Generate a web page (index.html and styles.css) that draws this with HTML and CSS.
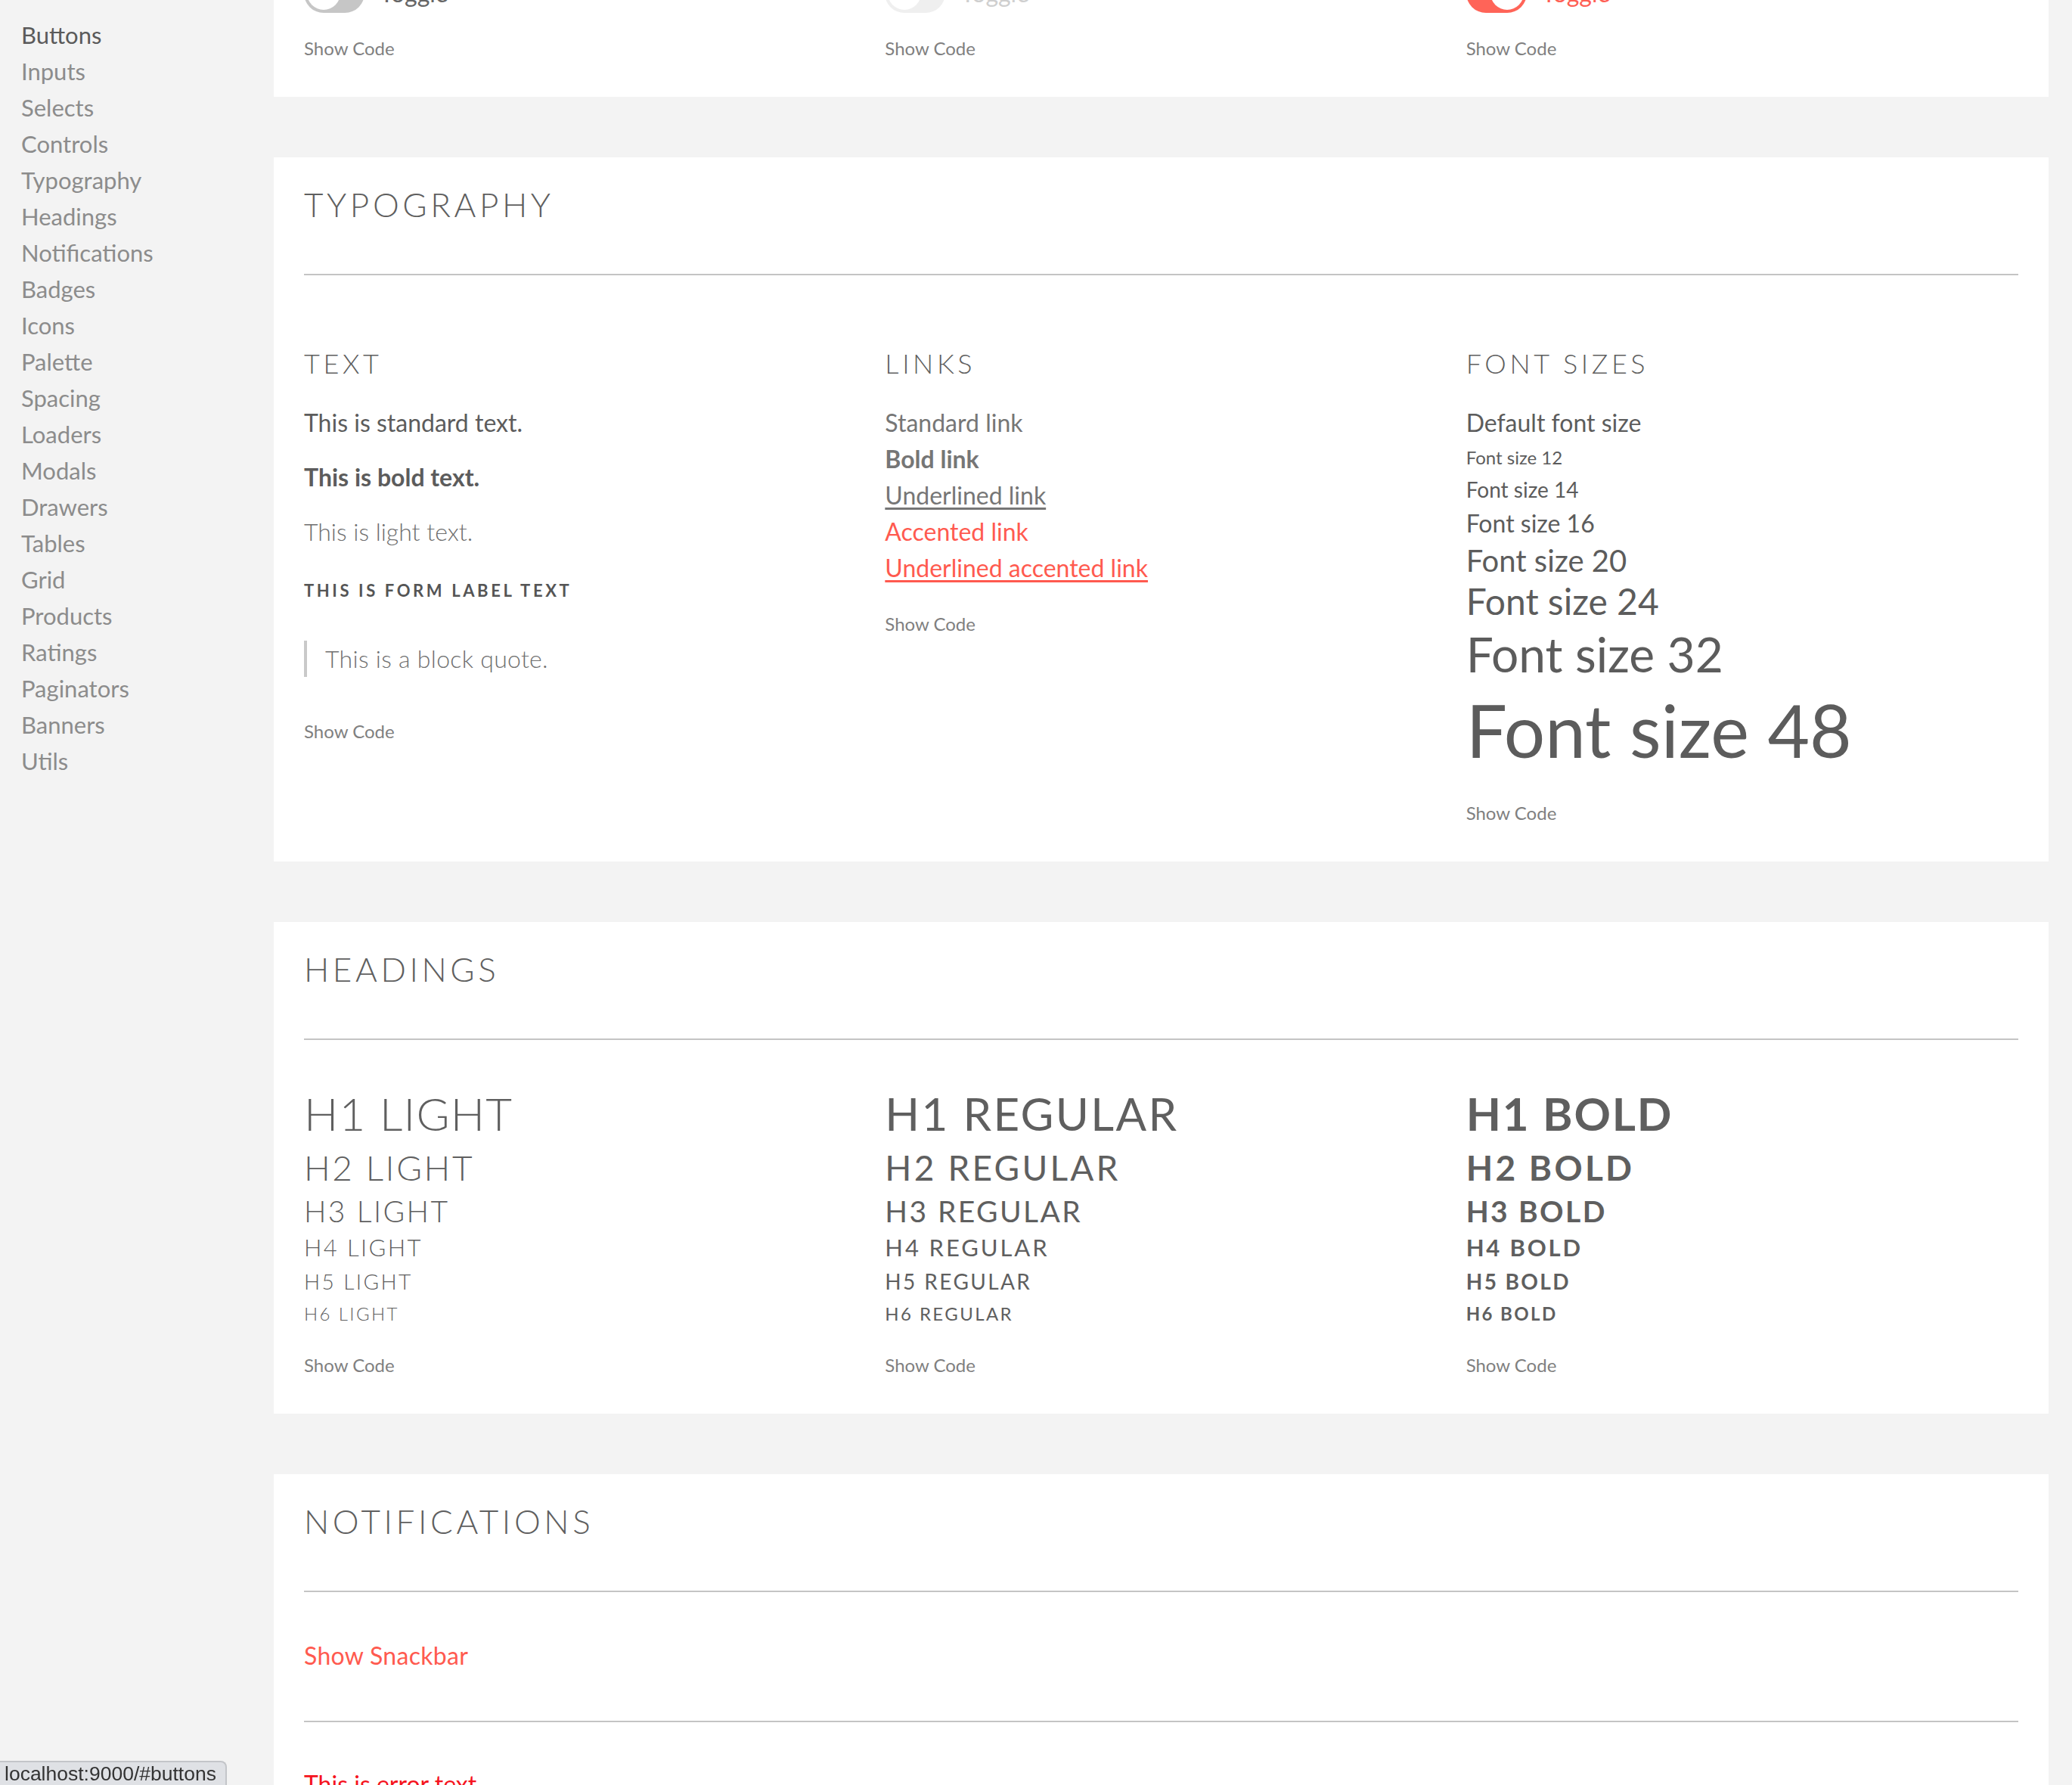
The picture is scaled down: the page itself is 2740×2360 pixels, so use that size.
FILE: index.html
```html
<!DOCTYPE html>
<html lang="en">
<head>
<meta charset="utf-8">
<title>Style Guide</title>
<link rel="stylesheet" href="styles.css">
</head>
<body>
<div class="layout">
  <nav class="sidebar">
    <a class="nav-item active" href="#buttons">Buttons</a>
    <a class="nav-item" href="#inputs">Inputs</a>
    <a class="nav-item" href="#selects">Selects</a>
    <a class="nav-item" href="#controls">Controls</a>
    <a class="nav-item" href="#typography">Typography</a>
    <a class="nav-item" href="#headings">Headings</a>
    <a class="nav-item" href="#notifications">Notifications</a>
    <a class="nav-item" href="#badges">Badges</a>
    <a class="nav-item" href="#icons">Icons</a>
    <a class="nav-item" href="#palette">Palette</a>
    <a class="nav-item" href="#spacing">Spacing</a>
    <a class="nav-item" href="#loaders">Loaders</a>
    <a class="nav-item" href="#modals">Modals</a>
    <a class="nav-item" href="#drawers">Drawers</a>
    <a class="nav-item" href="#tables">Tables</a>
    <a class="nav-item" href="#grid">Grid</a>
    <a class="nav-item" href="#products">Products</a>
    <a class="nav-item" href="#ratings">Ratings</a>
    <a class="nav-item" href="#paginators">Paginators</a>
    <a class="nav-item" href="#banners">Banners</a>
    <a class="nav-item" href="#utils">Utils</a>
  </nav>

  <main class="main">
    <section class="card card-partial">
      <div class="grid3">
        <div class="col">
          <div class="toggle-line">
            <span class="toggle"><span class="knob"></span></span>
            <span class="toggle-label">Toggle</span>
          </div>
          <div class="show-code toggle-code">Show Code</div>
        </div>
        <div class="col">
          <div class="toggle-line">
            <span class="toggle toggle-disabled"><span class="knob"></span></span>
            <span class="toggle-label label-disabled">Toggle</span>
          </div>
          <div class="show-code toggle-code">Show Code</div>
        </div>
        <div class="col">
          <div class="toggle-line">
            <span class="toggle toggle-on"><span class="knob"></span></span>
            <span class="toggle-label label-on">Toggle</span>
          </div>
          <div class="show-code toggle-code">Show Code</div>
        </div>
      </div>
    </section>

    <section class="card" id="typography">
      <h2 class="section-title">Typography</h2>
      <div class="divider"></div>
      <div class="grid3 typo-grid">
        <div class="col">
          <h3 class="subtitle">Text</h3>
          <p class="text-std">This is standard text.</p>
          <p class="text-std text-bold">This is bold text.</p>
          <p class="text-std text-light">This is light text.</p>
          <p class="form-label">This is form label text</p>
          <blockquote class="quote">This is a block quote.</blockquote>
          <div class="show-code">Show Code</div>
        </div>
        <div class="col">
          <h3 class="subtitle">Links</h3>
          <div class="link-list">
            <a class="link" href="#">Standard link</a>
            <a class="link link-bold" href="#">Bold link</a>
            <a class="link link-underline" href="#">Underlined link</a>
            <a class="link link-accent" href="#">Accented link</a>
            <a class="link link-accent link-underline" href="#">Underlined accented link</a>
          </div>
          <div class="show-code">Show Code</div>
        </div>
        <div class="col">
          <h3 class="subtitle">Font Sizes</h3>
          <div class="fs fs-default">Default font size</div>
          <div class="fs fs-12">Font size 12</div>
          <div class="fs fs-14">Font size 14</div>
          <div class="fs fs-16">Font size 16</div>
          <div class="fs fs-20">Font size 20</div>
          <div class="fs fs-24">Font size 24</div>
          <div class="fs fs-32">Font size 32</div>
          <div class="fs fs-48">Font size 48</div>
          <div class="show-code fs-code">Show Code</div>
        </div>
      </div>
    </section>

    <section class="card" id="headings">
      <h2 class="section-title">Headings</h2>
      <div class="divider"></div>
      <div class="grid3 head-grid">
        <div class="col w-light">
          <div class="hd hd1">H1 Light</div>
          <div class="hd hd2">H2 Light</div>
          <div class="hd hd3">H3 Light</div>
          <div class="hd hd4">H4 Light</div>
          <div class="hd hd5">H5 Light</div>
          <div class="hd hd6">H6 Light</div>
          <div class="show-code hd-code">Show Code</div>
        </div>
        <div class="col w-regular">
          <div class="hd hd1">H1 Regular</div>
          <div class="hd hd2">H2 Regular</div>
          <div class="hd hd3">H3 Regular</div>
          <div class="hd hd4">H4 Regular</div>
          <div class="hd hd5">H5 Regular</div>
          <div class="hd hd6">H6 Regular</div>
          <div class="show-code hd-code">Show Code</div>
        </div>
        <div class="col w-bold">
          <div class="hd hd1">H1 Bold</div>
          <div class="hd hd2">H2 Bold</div>
          <div class="hd hd3">H3 Bold</div>
          <div class="hd hd4">H4 Bold</div>
          <div class="hd hd5">H5 Bold</div>
          <div class="hd hd6">H6 Bold</div>
          <div class="show-code hd-code">Show Code</div>
        </div>
      </div>
    </section>

    <section class="card" id="notifications">
      <h2 class="section-title">Notifications</h2>
      <div class="divider"></div>
      <a class="snackbar-link" href="#">Show Snackbar</a>
      <div class="divider divider-2"></div>
      <p class="error-text">This is error text</p>
      <p class="error-text">This is error text</p>
    </section>
  </main>
</div>
<div class="status-bubble">localhost:9000/#buttons</div>
</body>
</html>
```

FILE: styles.css
```css
html, body {
  margin: 0;
  padding: 0;
  background: #f3f3f3;
}

body {
  font-family: Lato, "Open Sans", "Liberation Sans", sans-serif;
  color: #5f5f5f;
}

.layout {
  display: flex;
  align-items: flex-start;
  height: 2360px;
  overflow: hidden;
}

/* Sidebar */
.sidebar {
  flex: 0 0 362px;
  box-sizing: border-box;
  padding: 22px 0 0 28px;
  display: flex;
  flex-direction: column;
}

.nav-item {
  font-size: 31px;
  line-height: 48px;
  color: #8c8c8c;
  text-decoration: none;
}

.nav-item.active {
  color: #5a5a5a;
}

/* Main column */
.main {
  flex: 0 0 2347px;
  margin-right: 31px;
}

.card {
  background: #fff;
  padding: 32px 40px 46px;
  margin-bottom: 80px;
}

.card-partial {
  padding-top: 0;
}

.grid3 {
  display: grid;
  grid-template-columns: repeat(3, 1fr);
  column-gap: 38px;
  align-items: start;
}

.section-title {
  margin: 0;
  font-size: 44px;
  line-height: 60px;
  font-weight: 300;
  letter-spacing: 4.6px;
  text-transform: uppercase;
  color: #5f5f5f;
}

.divider {
  height: 2px;
  background: #c4c4c4;
  margin-top: 62px;
}

.show-code {
  font-size: 24px;
  line-height: 36px;
  color: #808080;
}

/* Toggles */
.toggle-line {
  display: flex;
  align-items: center;
  gap: 20px;
  margin-top: -35px;
}

.toggle {
  box-sizing: border-box;
  width: 80px;
  height: 52px;
  border-radius: 26px;
  padding: 4px;
  background: #c6c6c6;
  display: flex;
}

.toggle-disabled {
  background: #efefef;
}

.toggle-on {
  background: #ff6458;
  justify-content: flex-end;
}

.knob {
  width: 44px;
  height: 44px;
  border-radius: 50%;
  background: #fff;
}

.toggle-label {
  font-size: 32px;
  line-height: 48px;
  color: #666;
}

.label-disabled {
  color: #cfcfcf;
}

.label-on {
  color: #ff5f55;
}

.toggle-code {
  margin-top: 29px;
}

/* Typography */
.typo-grid {
  margin-top: 92px;
}

.subtitle {
  margin: 0 0 31px;
  font-size: 36px;
  line-height: 48px;
  font-weight: 300;
  letter-spacing: 4.6px;
  text-transform: uppercase;
  color: #5f5f5f;
}

.text-std {
  margin: 0 0 24px;
  font-size: 32px;
  line-height: 48px;
  color: #5c5c5c;
}

.text-bold {
  font-weight: 700;
}

.text-light {
  font-weight: 300;
  color: #6e6e6e;
  margin-bottom: 36px;
}

.form-label {
  margin: 0 0 48px;
  font-size: 22px;
  line-height: 36px;
  font-weight: 700;
  letter-spacing: 3.6px;
  text-transform: uppercase;
  color: #555;
}

.quote {
  margin: 0 0 54px;
  border-left: 4px solid #c9c9c9;
  padding-left: 24px;
  font-size: 32px;
  line-height: 48px;
  font-weight: 300;
  letter-spacing: 0.3px;
  color: #707070;
}

.link-list {
  display: flex;
  flex-direction: column;
  align-items: flex-start;
  margin-bottom: 32px;
}

.link {
  font-size: 32px;
  line-height: 48px;
  color: #767676;
  text-decoration: none;
}

.link-bold {
  font-weight: 700;
}

.link-underline {
  text-decoration: underline;
  text-decoration-thickness: 3px;
  text-underline-offset: 4px;
}

.link-accent {
  color: #ff5a4f;
}

.fs {
  color: #5c5c5c;
}

.fs-default { font-size: 32px; line-height: 48px; }
.fs-12 { font-size: 24px; line-height: 44px; }
.fs-14 { font-size: 28px; line-height: 40px; }
.fs-16 { font-size: 32px; line-height: 50px; }
.fs-20 { font-size: 40px; line-height: 48px; }
.fs-24 { font-size: 48px; line-height: 60px; }
.fs-32 { font-size: 64px; line-height: 80px; }
.fs-48 { font-size: 96px; line-height: 120px; }

.fs-code {
  margin-top: 32px;
}

/* Headings */
.head-grid {
  margin-top: 58px;
}

.hd {
  text-transform: uppercase;
  color: #5f5f5f;
  letter-spacing: 2.4px;
}

.hd1 { font-size: 60px; line-height: 79px; letter-spacing: 1.2px; }
.hd2 { font-size: 46px; line-height: 63px; letter-spacing: 2.6px; }
.hd3 { font-size: 39px; line-height: 52px; }
.hd4 { font-size: 31px; line-height: 44px; }
.hd5 { font-size: 28px; line-height: 46px; }
.hd6 { font-size: 24px; line-height: 40px; }

.w-light .hd { font-weight: 300; }
.w-regular .hd { font-weight: 400; }
.w-bold .hd { font-weight: 700; }

.w-regular .hd1 { letter-spacing: 2.4px; }
.w-bold .hd1 { letter-spacing: 1.9px; }
.w-regular .hd2 { letter-spacing: 3.2px; }
.w-bold .hd2 { letter-spacing: 3.3px; }
.w-regular .hd4 { letter-spacing: 2.9px; }
.w-bold .hd4 { letter-spacing: 2.8px; }

.hd-code {
  margin-top: 30px;
}

/* Notifications */
.snackbar-link {
  display: block;
  margin-top: 60px;
  font-size: 32px;
  line-height: 48px;
  letter-spacing: 0.3px;
  color: #ff5a4f;
  text-decoration: none;
}

.divider-2 {
  margin-top: 62px;
}

.error-text {
  margin: 58px 0 0;
  font-size: 32px;
  line-height: 48px;
  color: #f5141e;
}

/* Browser status bubble overlay */
.status-bubble {
  position: fixed;
  left: 0;
  bottom: 0;
  box-sizing: border-box;
  width: 300px;
  height: 32px;
  padding: 0 0 0 6px;
  background: #dfe1e5;
  border-top: 2px solid #c3c5c9;
  border-right: 2px solid #c3c5c9;
  border-top-right-radius: 8px;
  font-family: "Liberation Sans", Arial, sans-serif;
  font-size: 26.5px;
  line-height: 30px;
  color: #333;
  white-space: nowrap;
}
```
